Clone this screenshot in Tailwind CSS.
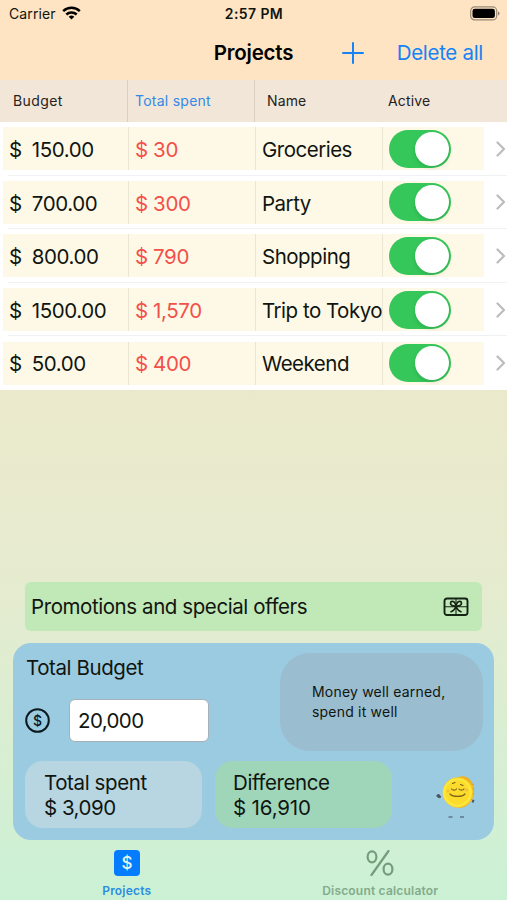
<!DOCTYPE html>
<html lang="en">
<head>
<meta charset="utf-8">
<title>Projects</title>
<script src="https://cdn.jsdelivr.net/npm/@tailwindcss/browser@4"></script>
</head>
<body class="w-[507px] h-[900px] overflow-hidden font-['Inter','Liberation_Sans',sans-serif] text-[#101510] whitespace-nowrap">
<svg class="hidden">
  <symbol id="chev" viewBox="0 0 10 16"><path d="M1.5 1.5 8 8l-6.500 6.500" fill="none" stroke="#bcbcbe" stroke-width="2.200" stroke-linecap="round" stroke-linejoin="round"/></symbol>
</svg>
<div class="h-full flex flex-col bg-linear-to-b from-[#f4e6c6] from-9% via-[#e6ebcf] via-64% to-[#cbf1d5]">
  <header class="h-[80px] shrink-0 bg-[#fee4c3]">
    <div class="h-[27px] grid grid-cols-3 items-center pl-[9px] pr-[7px]">
      <div class="flex items-center gap-[6px] text-[14px] tracking-[0.1px]">Carrier
        <svg class="w-[19px] h-[14px] -mt-[2px]" viewBox="0 0 19 14" fill="none" stroke="#000" stroke-width="2.500"><path d="M1.200 5.200a12 12 0 0 1 16.600 0M4.300 8.500a7.500 7.500 0 0 1 10.400 0"/><path d="M9.500 13.600 6.700 10.800a4 4 0 0 1 5.600 0Z" fill="#000" stroke="none"/></svg>
      </div>
      <div class="text-center text-[14px] font-semibold tracking-[0.4px] -ml-px">2:57 PM</div>
      <svg class="w-[30px] h-[15px] justify-self-end" viewBox="0 0 30 15"><rect x=".7" y=".9" width="26" height="13" rx="4" fill="none" stroke="#000" stroke-opacity=".4" stroke-width="1.200"/><rect x="2.500" y="2.700" width="22.400" height="9.400" rx="2.300"/><path d="M28 5.400c2 .8 2 3.200 0 4Z" fill-opacity=".45"/></svg>
    </div>
    <div class="h-[52px] grid grid-cols-[1fr_80px_1fr] items-center text-[20.5px]">
      <span></span>
      <h1 class="font-semibold text-center tracking-[-0.2px] text-black">Projects</h1>
      <div class="flex items-center justify-end gap-[33px] pr-[24px] text-[#1583f5]">
        <svg class="w-[22px] h-[22px]" viewBox="0 0 22 22" stroke="currentColor" stroke-width="2" stroke-linecap="round"><path d="M11 1v20M1 11h20"/></svg>
        <span class="tracking-[-0.3px]">Delete all</span>
      </div>
    </div>
  </header>
  <div class="h-[42px] shrink-0 grid grid-cols-[128px_127px_128px_1fr] items-stretch bg-[#f2e6d9] text-[14px] tracking-[0.15px] text-[#25221d]">
    <div class="flex items-center pl-[13px] pb-[2px] border-r border-[#d9cec1] tracking-[0.4px]">Budget</div>
    <div class="flex items-center pl-[7px] pb-[2px] border-r border-[#d9cec1] text-[#3289e8] tracking-[0.25px]">Total spent</div>
    <div class="flex items-center pl-[12px] pb-[2px]">Name</div>
    <div class="flex items-center pl-[5px] pb-[2px]">Active</div>
  </div>
  <main id="rows" class="h-[268px] shrink-0 bg-white flex flex-col text-[20.5px]"></main>
  <section class="mt-[192px] mx-[25px] h-[49px] shrink-0 rounded-[6px] bg-[#c1e8b7] flex items-center justify-between pl-[6px] pr-[13px] text-[20.5px] tracking-[-0.42px]">
    <span class="pt-[2px]">Promotions and special offers</span>
    <svg class="w-[26px] h-[20px]" viewBox="0 0 26 20" fill="none" stroke="#142314" stroke-width="1.900" stroke-linecap="round" stroke-linejoin="round"><rect x="1.500" y="1.500" width="23" height="16.500" rx="2.500"/><path d="M13 2v16M2 9.800h22" stroke-width="1.100"/><path d="M13 9C10 9.500 7.500 8.200 7.500 6.200 7.500 4 10.300 3.700 11.600 5.500 12.600 6.800 13 9 13 9ZM13 9c3 .5 5.500-.8 5.500-2.800 0-2.200-2.800-2.500-4.100-.7C13.400 6.800 13 9 13 9ZM13 9c-1 3-2.800 5-5 5.700M13 9c1 3 2.800 5 5 5.700" stroke-width="1.700"/></svg>
  </section>
  <section class="mt-[12px] mx-[13px] h-[197px] shrink-0 rounded-[18px] bg-[#9bcbe0] pl-[12px] pr-[11px] text-[20.5px]">
    <div class="flex justify-between h-[118px]">
      <div>
        <h2 class="mt-[10px] leading-[30px] tracking-[-0.42px] pl-px">Total Budget</h2>
        <div class="flex items-center gap-[18px] mt-[16px]">
          <svg class="w-[26px] h-[26px]" viewBox="0 0 26 26"><circle cx="12.500" cy="12.500" r="11.300" fill="none" stroke="#0b1a20" stroke-width="2"/><text x="12.500" y="17.500" text-anchor="middle" font-family="Inter" font-size="14" font-weight="500" fill="#0b1a20">$</text></svg>
          <div class="w-[140px] h-[43px] bg-white rounded-[6px] border border-[#a5b0b9] flex items-center pl-[8px] pt-[2px] tracking-[-0.6px]">20,000</div>
        </div>
      </div>
      <div class="mt-[10px] w-[203px] h-[98px] rounded-[30px] bg-[#9abdcf] flex items-center pl-[32px] text-[14px] leading-[20px] tracking-[0.2px]"><p>Money well earned,<br>spend it well</p></div>
    </div>
    <div class="flex items-start">
      <div class="w-[177px] h-[67px] rounded-[18px] bg-[#b7d6e2] pl-[19px] pt-[9px] leading-[25px] tracking-[-0.4px]">Total spent<br><span class="tracking-[-0.5px]">$ 3,090</span></div>
      <div class="ml-[13px] w-[177px] h-[67px] rounded-[18px] bg-[#9fd6b9] pl-[18px] pt-[9px] leading-[25px] tracking-[-0.4px]">Difference<br><span class="tracking-[-0.15px]">$ 16,910</span></div>
      <svg class="ml-[43px] mt-[13px] w-[44px] h-[46px]" viewBox="0 0 44 46">
        <g transform="translate(2.500 0)">
          <path d="M21 3c8-3 15 4 15.500 13S30 34 22 34" fill="#efb01c"/>
          <circle cx="20.500" cy="18.500" r="15.300" fill="#f8c822"/><circle cx="20" cy="18.500" r="14.500" fill="#fee63b"/><circle cx="20" cy="18.500" r="12" fill="#fbdc2d"/>
          <path d="M35 10l1 .5M35.500 15h1M35.500 20l1 .4M34 25l1 1" stroke="#d88913"/>
          <circle cx="10.500" cy="17" r="1.500" fill="#f7bb40"/><circle cx="29" cy="16" r="1.500" fill="#f7bb40"/>
          <path d="M14 15c1 1.500 4 1.500 5 0M21.500 15c1 1.500 4 1.500 5 0M12.500 20c3 3.200 12 3.200 15 0M15 9.500l2.500-1M23 10.500l2.500 1" fill="none" stroke="#806019" stroke-width="1.200" stroke-linecap="round"/>
        </g>
        <path d="m1.500 22 2-2 2.500 3-2 .8ZM37 27l2-1-1 2.500Z" fill="#4c5360" stroke="#4c5360"/>
        <path d="M13.500 43h4M25 43h4" stroke="#607889" stroke-width="1.500"/>
      </svg>
    </div>
  </section>
  <nav class="grow grid grid-cols-2 text-[12px] font-semibold tracking-[0.2px]">
    <div class="flex flex-col items-center pt-[10px] text-[#2a8de0]">
      <svg class="w-[26px] h-[26px]" viewBox="0 0 26 26"><rect width="26" height="26" rx="4" fill="#037cff"/><text x="13" y="19" text-anchor="middle" font-family="Inter" font-size="17" font-weight="500" fill="#e1f6ed">$</text></svg>
      <span class="mt-[7px] leading-[16px]">Projects</span>
    </div>
    <div class="flex flex-col items-center pt-[10px] text-[#83ab8b]">
      <svg class="w-[28px] h-[26px]" viewBox="0 0 28 26" fill="none" stroke="#759c7b" stroke-width="2.200" stroke-linecap="round"><ellipse cx="6" cy="6.800" rx="4.400" ry="5.500"/><ellipse cx="22" cy="19.200" rx="4.400" ry="5.500"/><path d="M22.500 1 5.500 25"/></svg>
      <span class="mt-[7px] leading-[16px]">Discount calculator</span>
    </div>
  </nav>
</div>
<script>
const rows = [["150.00","30","Groceries"],["700.00","300","Party"],["800.00","790","Shopping"],["1500.00","1,570","Trip to Tokyo"],["50.00","400","Weekend"]];
document.getElementById("rows").innerHTML = rows.map(([b, s, n], i) => `
  <div class="flex-1 flex items-center justify-between pl-[3px] relative">
    <div class="w-[481px] h-[43px] grid grid-cols-[126px_127px_127px_1fr] bg-[#fef9e6]">
      <div class="flex items-center gap-[10px] pl-[6px] pt-[3px] border-r border-[#ebe5d3] tracking-[-0.4px]"><span>$</span><span>${b}</span></div>
      <div class="flex items-center pl-[6px] pt-[3px] border-r border-[#ebe5d3] text-[#f2504a] tracking-[-0.4px]">$ ${s}</div>
      <div class="flex items-center pl-[6px] pt-[3px] border-r border-[#ebe5d3] tracking-[-0.5px]">${n}</div>
      <div class="flex items-center pl-[6px]"><span class="w-[62px] h-[38px] rounded-full bg-[#35c759] flex items-center justify-end pr-[2px]"><i class="size-[34px] rounded-full bg-white shadow-[0_2px_4px_rgba(0,0,0,0.13)]"></i></span></div>
    </div>
    <svg class="w-[10px] h-[16px] mr-[1px]"><use href="#chev"/></svg>
    ${i < 4 ? '<i class="absolute left-[8px] right-0 bottom-0 h-px bg-[#eff1f3]"></i>' : ''}
  </div>`).join("");
</script>
</body>
</html>
